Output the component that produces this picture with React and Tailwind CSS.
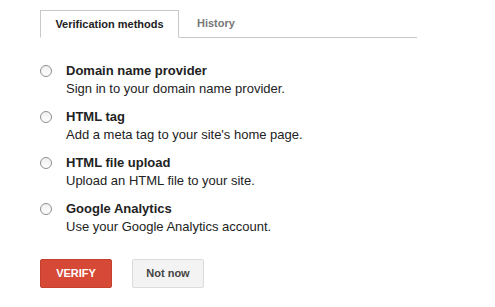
import React from "react";

const methods = [
  { id: "dns", title: "Domain name provider", desc: "Sign in to your domain name provider." },
  { id: "tag", title: "HTML tag", desc: "Add a meta tag to your site's home page." },
  { id: "file", title: "HTML file upload", desc: "Upload an HTML file to your site." },
  { id: "ga", title: "Google Analytics", desc: "Use your Google Analytics account." },
];

function Radio() {
  return (
    <span className="mt-[3px] block h-[12px] w-[12px] shrink-0 rounded-full border border-[#8f8f8f] bg-gradient-to-b from-[#f0f0f0] to-white" />
  );
}

export default function App() {
  return (
    <div className="min-h-[307px] bg-white pl-[40px] pt-[10px] font-['Liberation_Sans',Arial,sans-serif] text-[13px] text-[#222]">
      <div className="flex w-[377px] border-b border-[#c8c8c8]">
        <div className="-mb-px flex h-[28px] w-[139px] items-center justify-center border border-b-white border-[#c8c8c8] bg-white text-[11px] font-bold text-[#222]">
          Verification methods
        </div>
        <div className="flex h-[27px] items-center pl-[18px] text-[11px] font-bold text-[#777]">
          History
        </div>
      </div>

      <div className="mt-[24px] flex flex-col gap-[10px]">
        {methods.map((m) => (
          <label key={m.id} className="flex gap-[14px]">
            <Radio />
            <div className="leading-[18px]">
              <div className="font-bold text-[#222]">{m.title}</div>
              <div className="text-[#222]">{m.desc}</div>
            </div>
          </label>
        ))}
      </div>

      <div className="mt-[23px] flex gap-[20px]">
        <button className="h-[29px] w-[72px] rounded-[2px] border border-[#c6402f] bg-[#d64937] text-[11px] font-bold text-white">
          VERIFY
        </button>
        <button className="h-[29px] w-[72px] rounded-[2px] border border-[#dcdcdc] bg-[#f3f3f3] text-[11px] font-bold text-[#444]">
          Not now
        </button>
      </div>
    </div>
  );
}
